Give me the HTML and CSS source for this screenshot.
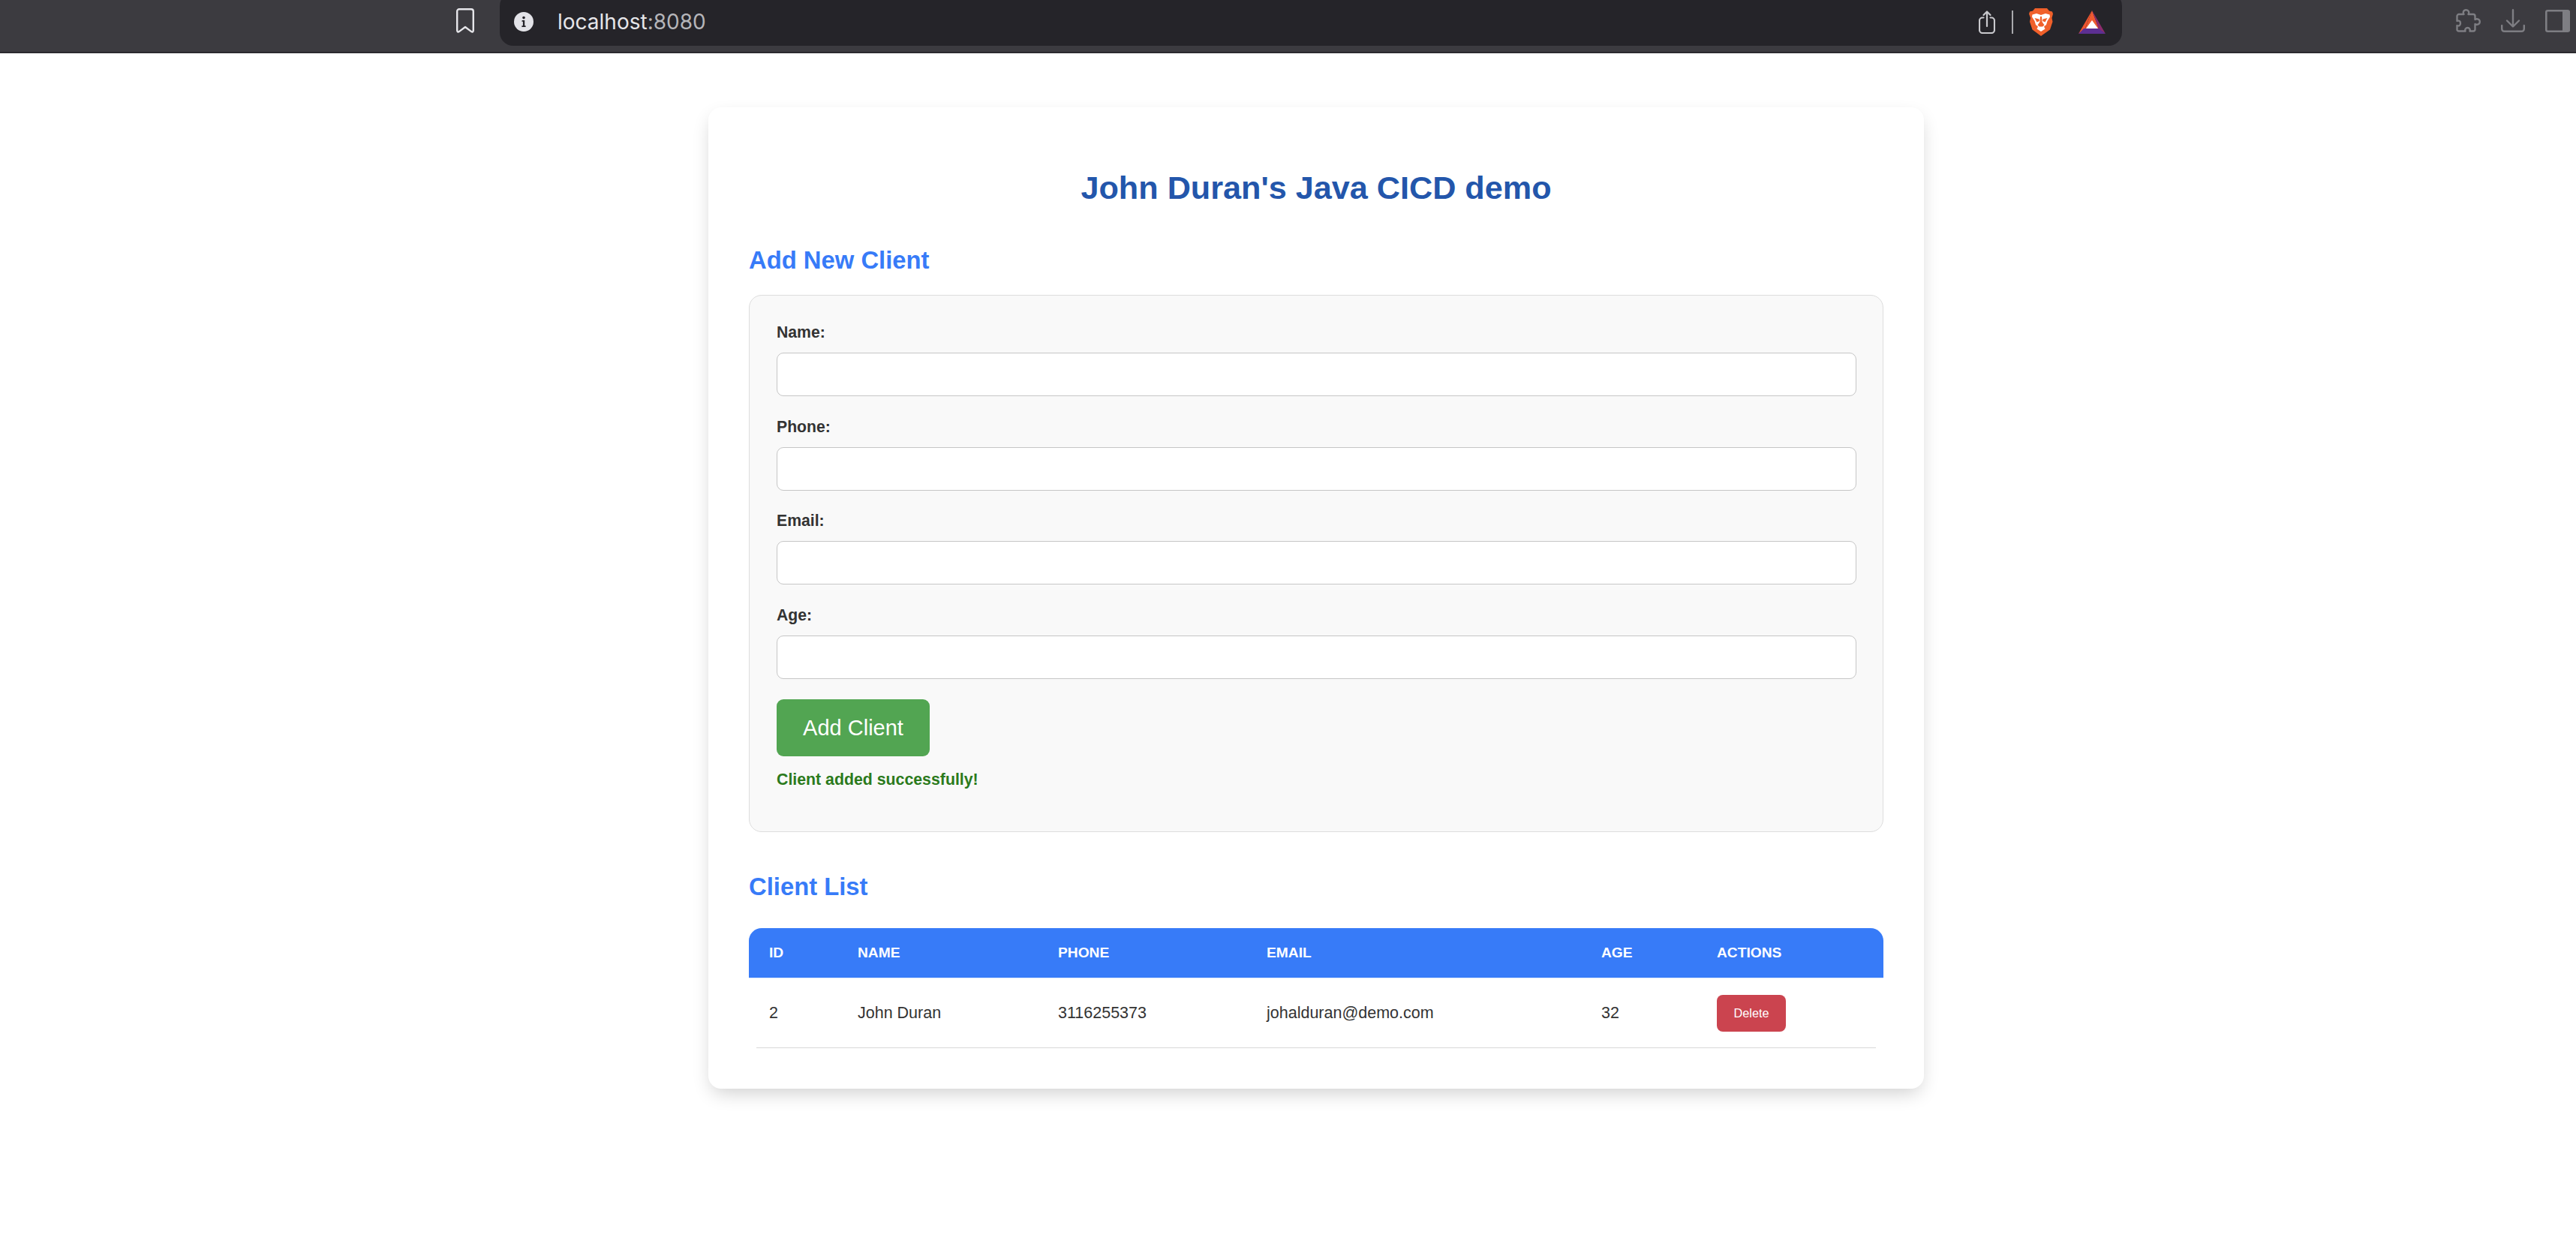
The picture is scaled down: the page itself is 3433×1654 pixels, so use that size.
FILE: index.html
```html
<!DOCTYPE html>
<html lang="en">
<head>
    <meta charset="UTF-8">
    <meta name="viewport" content="width=device-width, initial-scale=1.0">
    <title>John Duran's Java CICD demo</title>
    <link rel="stylesheet" href="styles.css">
</head>
<body>
    <!-- browser toolbar -->
    <header class="toolbar">
        <svg class="icon-bookmark" viewBox="0 0 24 33" fill="none" stroke="#e6e6ea" stroke-width="2.4" stroke-linejoin="round">
            <path d="M4 1.200h16a2.800 2.800 0 0 1 2.800 2.800v25.600c0 1.800-1.400 2.400-2.600 1.500L12 25l-8.200 6.100c-1.200.9-2.600.3-2.600-1.500V4A2.800 2.800 0 0 1 4 1.200z"/>
        </svg>
        <div class="address-bar">
            <svg class="icon-info" viewBox="0 0 26 26">
                <circle cx="13" cy="13" r="13" fill="#e3e3e8"/>
                <circle cx="13" cy="7.600" r="1.800" fill="#252429"/>
                <path d="M10.800 11h3.400v7.200h1.400V20h-5.200v-1.800h1.500v-5.400h-1.600z" fill="#252429"/>
            </svg>
            <span class="url">localhost<span class="url-port">:8080</span></span>
            <div class="bar-actions">
                <svg class="icon-share" viewBox="0 0 22 31" fill="none" stroke="#c9c9cd" stroke-width="2.200" stroke-linecap="round" stroke-linejoin="round">
                    <path d="M6.500 9.500H5a4 4 0 0 0-4 4V26a4 4 0 0 0 4 4h12a4 4 0 0 0 4-4V13.500a4 4 0 0 0-4-4h-1.500"/>
                    <path d="M11 21V1.500M6.500 6L11 1.500 15.500 6"/>
                </svg>
                <span class="bar-divider"></span>
                <svg class="icon-brave" viewBox="0 0 32 37">
                    <path d="M8 0h16l3 3.500 4 1 1 3-1.500 5.500 1 5-3.500 10.500L16 37 4.500 28.500 1 18l1-5L0 7.500l1-3 4-1z" fill="#f0602a"/>
                    <path d="M4.500 8.500L10 7l6 2 6-2 5.500 1.500.5 3-3.500 5.500-1.500 5-3 2.500 1.500 3-5.500 3.500-5.500-3.500 1.500-3-3-2.500-1.500-5L4 11.500z" fill="#fff"/>
                    <path d="M7.500 13l6 1.500.5 2.500-3.500 1.500zM24.500 13l-6 1.500-.5 2.500 3.500 1.500zM15 11h2l.5 7 3 4.500-2.500 2h-4l-2.500-2 3-4.500z" fill="#f0602a"/>
                    <path d="M13.500 25h5l-2.500 2.500z" fill="#fff"/>
                </svg>
                <svg class="icon-bat" viewBox="0 0 36 31">
                    <path d="M18 0L0 31l8-5z" fill="#f0552f"/>
                    <path d="M18 0L9 24h18z" fill="#ee5a30"/>
                    <path d="M18 0l18 31-9-6-3-9z" fill="#8c2c6d"/>
                    <path d="M0 31h36l-9-7H7z" fill="#5c2f92"/>
                    <path d="M18 13l8 11H10z" fill="#fff"/>
                </svg>
            </div>
        </div>
        <div class="window-actions">
            <svg class="icon-puzzle" viewBox="0 0 34 32" fill="none" stroke="#7e7e83" stroke-width="2.400" stroke-linejoin="round">
                <path d="M5 7h6.500c-1.500-2.500-.5-5.800 3-5.800s4.500 3.300 3 5.800H24a2.500 2.500 0 0 1 2.500 2.500V14c2.500-1.500 6.300-.5 6.300 3s-3.800 4.500-6.300 3v7a2.500 2.500 0 0 1-2.500 2.500h-4.500c.8-2.500-.5-4.500-3-4.500s-3.800 2-3 4.500H5A2.500 2.500 0 0 1 2.500 28v-6c2.500 1 4.500-.3 4.500-3s-2-4-4.500-3V9.500A2.500 2.500 0 0 1 5 7z"/>
            </svg>
            <svg class="icon-download" viewBox="0 0 32 31" fill="none" stroke="#7e7e83" stroke-width="2.400" stroke-linecap="round" stroke-linejoin="round">
                <path d="M16 1.200v22M8 15.500l8 8 8-8"/>
                <path d="M1.200 22v4.500a3.500 3.500 0 0 0 3.500 3.300h22.600a3.500 3.500 0 0 0 3.500-3.300V22"/>
            </svg>
            <svg class="icon-sidebar" viewBox="0 0 33 30">
                <rect x="1.300" y="1.300" width="30.400" height="27.400" rx="2" fill="none" stroke="#7e7e83" stroke-width="2.600"/>
                <path d="M23 1h8a2 2 0 0 1 2 2v24a2 2 0 0 1-2 2h-8z" fill="#7e7e83"/>
            </svg>
        </div>
    </header>

    <main class="container">
        <h1>John Duran's Java CICD demo</h1>

        <h2 class="section-title">Add New Client</h2>
        <form class="client-form">
            <div class="form-group">
                <label for="name">Name:</label>
                <input type="text" id="name">
            </div>
            <div class="form-group">
                <label for="phone">Phone:</label>
                <input type="text" id="phone">
            </div>
            <div class="form-group">
                <label for="email">Email:</label>
                <input type="text" id="email">
            </div>
            <div class="form-group">
                <label for="age">Age:</label>
                <input type="text" id="age">
            </div>
            <button type="button" class="btn-add">Add Client</button>
            <p class="message">Client added successfully!</p>
        </form>

        <h2 class="section-title list-title">Client List</h2>
        <table class="client-table">
            <colgroup>
                <col class="col-id">
                <col class="col-name">
                <col class="col-phone">
                <col class="col-email">
                <col class="col-age">
                <col class="col-actions">
            </colgroup>
            <thead>
                <tr>
                    <th>ID</th>
                    <th>Name</th>
                    <th>Phone</th>
                    <th>Email</th>
                    <th>Age</th>
                    <th>Actions</th>
                </tr>
            </thead>
            <tbody>
                <tr>
                    <td>2</td>
                    <td>John Duran</td>
                    <td>3116255373</td>
                    <td>johalduran@demo.com</td>
                    <td>32</td>
                    <td><button type="button" class="btn-delete">Delete</button></td>
                </tr>
            </tbody>
        </table>
        <div class="table-rule"></div>
    </main>
</body>
</html>
```

FILE: styles.css
```css
body {
    font-family: "Liberation Sans", Arial, sans-serif;
    background-color: #fff;
    color: #333;
    margin: 0;
    padding: 0 0 200px;
}

/* browser toolbar */
.toolbar {
    display: flex;
    align-items: center;
    box-sizing: border-box;
    height: 71px;
    padding: 0 8px 14px 608px;
    background-color: #3c3b40;
    border-bottom: 2px solid #2b2a2f;
    overflow: hidden;
}

.icon-bookmark {
    width: 24px;
    height: 33px;
    flex: none;
}

.address-bar {
    display: flex;
    align-items: center;
    align-self: flex-start;
    box-sizing: border-box;
    width: 2162px;
    height: 71px;
    margin: -10px 0 0 34px;
    padding: 7px 22px 0 19px;
    background-color: #252429;
    border-radius: 18px;
    flex: none;
}

.icon-info {
    width: 26px;
    height: 26px;
    flex: none;
}

.url {
    margin-left: 32px;
    font-family: Inter, "Noto Sans", sans-serif;
    font-size: 28px;
    color: #e6e6e9;
}

.url-port {
    color: #b5b5b9;
}

.bar-actions {
    display: flex;
    align-items: center;
    margin-left: auto;
}

.icon-share {
    width: 22px;
    height: 31px;
}

.bar-divider {
    width: 2px;
    height: 31px;
    margin: 0 21px 0 22px;
    background-color: #a9a9ad;
}

.icon-brave {
    width: 32px;
    height: 37px;
}

.icon-bat {
    width: 36px;
    height: 31px;
    margin-left: 34px;
}

.window-actions {
    display: flex;
    align-items: center;
    gap: 27px;
    margin-left: auto;
}

.icon-puzzle {
    width: 34px;
    height: 32px;
}

.icon-download {
    width: 32px;
    height: 31px;
}

.icon-sidebar {
    width: 33px;
    height: 30px;
}

/* page card */
.container {
    box-sizing: border-box;
    width: 1620px;
    margin: 72px 0 0 944px;
    padding: 54px;
    background: white;
    border-radius: 17px;
    box-shadow: 0px 10px 26px -5px rgba(0, 0, 0, 0.2);
}

h1 {
    margin: 28px 0 0;
    font-size: 43.200px;
    line-height: 50px;
    text-align: center;
    color: #2356ab;
}

.section-title {
    margin: 53px 0 27px;
    font-size: 32.800px;
    line-height: 38px;
    color: #377bf8;
}

.list-title {
    margin: 54px 0 36px;
}

.client-form {
    padding: 37px 35px 37px 36px;
    background-color: #f9f9f9;
    border: 1px solid #ddd;
    border-radius: 17px;
}

.form-group {
    margin-bottom: 28.500px;
}

.form-group:nth-child(4) {
    margin-bottom: 27.500px;
}

label {
    display: block;
    margin-bottom: 15px;
    font-size: 21.200px;
    line-height: 24px;
    font-weight: bold;
    color: #333;
}

input {
    display: block;
    box-sizing: border-box;
    width: 100%;
    height: 58px;
    background: white;
    border: 1px solid #c6c6c6;
    border-radius: 9px;
}

.btn-add {
    display: block;
    width: 204px;
    height: 76px;
    padding: 0;
    background-color: #52a552;
    color: white;
    border: none;
    border-radius: 9px;
    font-family: "Liberation Sans", Arial, sans-serif;
    font-size: 29px;
}

.message {
    margin: 19px 0 20px;
    font-size: 21.300px;
    line-height: 24px;
    font-weight: bold;
    color: #2b7a1c;
}

/* client table */
.client-table {
    width: 100%;
    table-layout: fixed;
    border-collapse: separate;
    border-spacing: 0;
}

.col-id { width: 118px; }
.col-name { width: 267px; }
.col-phone { width: 278px; }
.col-email { width: 446px; }
.col-age { width: 154px; }

th {
    height: 66px;
    padding: 0 0 0 27px;
    background-color: #377bf8;
    border-bottom: 1px solid #dde8fb;
    color: white;
    font-size: 19.200px;
    text-align: left;
    text-transform: uppercase;
}

th:first-child {
    border-top-left-radius: 17px;
}

th:last-child {
    border-top-right-radius: 17px;
}

td {
    height: 92px;
    padding: 0 0 0 27px;
    font-size: 21.500px;
    color: #333;
}

.btn-delete {
    display: block;
    width: 92px;
    height: 49px;
    padding: 0;
    background-color: #cb444f;
    color: white;
    border: none;
    border-radius: 8px;
    font-family: "Liberation Sans", Arial, sans-serif;
    font-size: 16.300px;
}

.table-rule {
    height: 1px;
    margin: 0 10px;
    background-color: #d8d8d8;
}
```
